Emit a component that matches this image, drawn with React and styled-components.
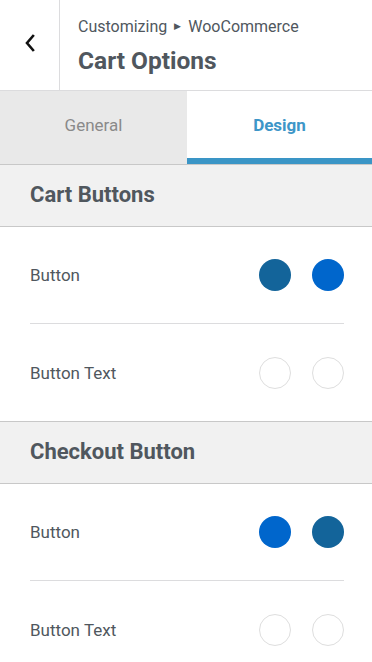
import React from "react";
import styled, { createGlobalStyle } from "styled-components";

const Global = createGlobalStyle`
  html, body { margin: 0; padding: 0; background: #fff; }
  body { font-family: Roboto, "Noto Sans", "Liberation Sans", sans-serif; -webkit-font-smoothing: antialiased; }
  * { box-sizing: border-box; }
`;

const Page = styled.div`
  width: 372px;
  background: #fff;
`;

const Header = styled.header`
  display: flex;
  height: 91px;
  border-bottom: 1px solid #dcdcde;
`;

const BackButton = styled.button`
  width: 60px;
  border: none;
  border-right: 1px solid #dcdcde;
  background: #fff;
  display: flex;
  align-items: center;
  justify-content: center;
  padding: 0 0 4px 0;
  cursor: pointer;
`;

const TitleBlock = styled.div`
  display: flex;
  flex-direction: column;
  justify-content: center;
  padding: 1px 0 0 18px;
  gap: 10px;
`;

const Crumb = styled.div`
  font-size: 16px;
  line-height: 19px;
  color: #50575e;
  display: flex;
  align-items: center;
  gap: 7px;
`;

const Arrow = styled.span`
  font-size: 9px;
  color: #50575e;
`;

const Title = styled.h1`
  margin: 0;
  font-size: 24.5px;
  line-height: 29px;
  font-weight: 700;
  color: #50575e;
`;

const Tabs = styled.div`
  display: flex;
  height: 74px;
  border-bottom: 1px solid #c8c8c8;
`;

const Tab = styled.div`
  flex: 0 0 ${(p) => p.$w}px;
  display: flex;
  align-items: center;
  justify-content: center;
  padding-top: 1px;
  font-size: 17px;
  font-weight: ${(p) => (p.$active ? 700 : 400)};
  color: ${(p) => (p.$active ? "#3d96c8" : "#8a8a8a")};
  background: ${(p) => (p.$active ? "#fff" : "#e9e9e9")};
  border-bottom: 6px solid ${(p) => (p.$active ? "#3a95c6" : "transparent")};
`;

const SectionHeader = styled.div`
  height: ${(p) => (p.$top ? 63 : 62)}px;
  display: flex;
  align-items: center;
  padding: 0 0 3px 30px;
  background: #f1f1f1;
  border-top: ${(p) => (p.$top ? "1px solid #c8c8c8" : "none")};
  border-bottom: 1px solid #c8c8c8;
  font-size: 22px;
  font-weight: 700;
  color: #50575e;
`;

const Rows = styled.div`
  padding: 0 28px 0 30px;
`;

const Row = styled.div`
  height: 97px;
  display: flex;
  align-items: center;
  justify-content: space-between;
  border-bottom: ${(p) => (p.$last ? "none" : "1px solid #dcdcde")};
`;

const Label = styled.span`
  font-size: 17px;
  color: #50575e;
`;

const Swatches = styled.div`
  display: flex;
  gap: 21px;
`;

const Swatch = styled.span`
  width: 32px;
  height: 32px;
  border-radius: 50%;
  background: ${(p) => p.$c};
  border: ${(p) => (p.$c === "#fff" ? "1px solid #dedede" : "none")};
`;

const Section = ({ title, top, rows }) => (
  <>
    <SectionHeader $top={top}>{title}</SectionHeader>
    <Rows>
      {rows.map((r, i) => (
        <Row key={i} $last={i === rows.length - 1}>
          <Label>{r.label}</Label>
          <Swatches>
            {r.colors.map((c, j) => (
              <Swatch key={j} $c={c} />
            ))}
          </Swatches>
        </Row>
      ))}
    </Rows>
  </>
);

export default function App() {
  return (
    <Page>
      <Global />
      <Header>
        <BackButton aria-label="Back">
          <svg width="12" height="18" viewBox="0 0 12 18">
            <path d="M9 2 L3 9 L9 16" fill="none" stroke="#111" strokeWidth="2.6" strokeLinecap="square" />
          </svg>
        </BackButton>
        <TitleBlock>
          <Crumb>
            Customizing <Arrow>▶</Arrow> WooCommerce
          </Crumb>
          <Title>Cart Options</Title>
        </TitleBlock>
      </Header>
      <Tabs>
        <Tab $w={187}>General</Tab>
        <Tab $w={185} $active>Design</Tab>
      </Tabs>
      <Section
        title="Cart Buttons"
        rows={[
          { label: "Button", colors: ["#13649a", "#0066cc"] },
          { label: "Button Text", colors: ["#fff", "#fff"] },
        ]}
      />
      <Section
        title="Checkout Button"
        top
        rows={[
          { label: "Button", colors: ["#0066cc", "#13649a"] },
          { label: "Button Text", colors: ["#fff", "#fff"] },
        ]}
      />
    </Page>
  );
}
